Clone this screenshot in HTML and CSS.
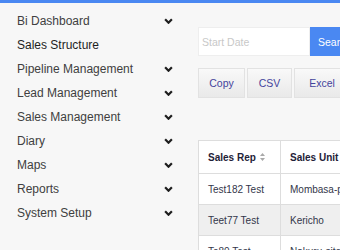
FILE: index.html
```html
<!DOCTYPE html>
<html lang="en">

<head>
    <meta charset="UTF-8">
    <meta name="viewport" content="width=device-width, initial-scale=1.0">
    <title>Sales Structure</title>
    <link rel="stylesheet" href="styles.css">
</head>

<body>
    <div class="topbar"></div>

    <div class="layout">
        <ul class="sidebar">
            <li>Bi Dashboard <svg class="chev" viewBox="0 0 8 5"><path d="M1 1l3 3 3-3"/></svg></li>
            <li class="active">Sales Structure</li>
            <li>Pipeline Management <svg class="chev" viewBox="0 0 8 5"><path d="M1 1l3 3 3-3"/></svg></li>
            <li>Lead Management <svg class="chev" viewBox="0 0 8 5"><path d="M1 1l3 3 3-3"/></svg></li>
            <li>Sales Management <svg class="chev" viewBox="0 0 8 5"><path d="M1 1l3 3 3-3"/></svg></li>
            <li>Diary <svg class="chev" viewBox="0 0 8 5"><path d="M1 1l3 3 3-3"/></svg></li>
            <li>Maps <svg class="chev" viewBox="0 0 8 5"><path d="M1 1l3 3 3-3"/></svg></li>
            <li>Reports <svg class="chev" viewBox="0 0 8 5"><path d="M1 1l3 3 3-3"/></svg></li>
            <li>System Setup <svg class="chev" viewBox="0 0 8 5"><path d="M1 1l3 3 3-3"/></svg></li>
        </ul>

        <div class="main">
            <div class="search-row">
                <input type="text" class="date-input" placeholder="Start Date">
                <button type="button" class="search-btn">Search</button>
            </div>

            <div class="export-row">
                <button type="button" class="export-btn copy">Copy</button>
                <button type="button" class="export-btn csv">CSV</button>
                <button type="button" class="export-btn excel">Excel</button>
            </div>

            <table class="data-table">
                <thead>
                    <tr>
                        <th class="col-rep">Sales Rep <svg class="sort" viewBox="0 0 5 8"><path d="M2.5 0L5 3H0zM2.5 8L0 5h5z"/></svg></th>
                        <th>Sales Unit <svg class="sort" viewBox="0 0 5 8"><path d="M2.5 0L5 3H0zM2.5 8L0 5h5z"/></svg></th>
                    </tr>
                </thead>
                <tbody>
                    <tr>
                        <td>Test182 Test</td>
                        <td>Mombasa-port</td>
                    </tr>
                    <tr class="odd">
                        <td>Teet77 Test</td>
                        <td>Kericho</td>
                    </tr>
                    <tr>
                        <td>Te80 Test</td>
                        <td>Nakuru-site</td>
                    </tr>
                </tbody>
            </table>
        </div>
    </div>
</body>

</html>
```

FILE: styles.css
```css
/* Sales structure page */

body {
    font-family: "Liberation Sans", Arial, sans-serif;
    margin: 0;
    padding: 0;
    background-color: #f7f7f7;
    overflow: hidden;
}

.topbar {
    height: 3px;
    background-color: #4a88f2;
}

.layout {
    display: flex;
}

/* Sidebar */

.sidebar {
    width: 198px;
    flex-shrink: 0;
    list-style: none;
    margin: 0;
    padding: 6px 0 0 0;
    box-sizing: border-box;
}

.sidebar li {
    display: flex;
    align-items: center;
    justify-content: space-between;
    height: 24px;
    padding: 0 25px 0 17px;
    font-size: 12px;
    color: #404040;
}

.sidebar li.active {
    color: #1e1e1e;
}

.chev {
    width: 9px;
    height: 6px;
    fill: none;
    stroke: #1e1e1e;
    stroke-width: 2;
}

/* Main */

.main {
    flex: 1;
    min-width: 0;
    overflow: hidden;
    padding-top: 24px;
}

.search-row {
    display: flex;
}

.date-input {
    width: 112px;
    height: 29px;
    flex-shrink: 0;
    box-sizing: border-box;
    border: 1px solid #eee;
    background: #fff;
    padding: 0 3px;
    font-family: inherit;
    font-size: 10.5px;
    outline: none;
}

.date-input::placeholder {
    color: #c8c8c8;
}

.search-btn {
    width: 70px;
    height: 29px;
    flex-shrink: 0;
    border: none;
    background-color: #4a88f2;
    color: #fff;
    font-family: inherit;
    font-size: 10.5px;
    text-align: left;
    padding: 0 8px;
}

.export-row {
    display: flex;
    gap: 2px;
    margin-top: 12px;
}

.export-btn {
    height: 30px;
    flex-shrink: 0;
    box-sizing: border-box;
    border: 1px solid #e2e2e2;
    background: linear-gradient(#f9f9f9, #e9e9e9);
    color: #44449c;
    font-family: inherit;
    font-size: 10.5px;
    padding: 0;
}

.copy {
    width: 47px;
}

.csv {
    width: 45px;
}

.excel {
    width: 56px;
}

/* Table */

.data-table {
    margin-top: 42px;
    width: 260px;
    border-collapse: collapse;
    background-color: #fff;
    font-size: 10px;
    color: #33364a;
    white-space: nowrap;
}

.data-table th,
.data-table td {
    border: 1px solid #ddd;
    text-align: left;
    padding: 0 9px;
}

.data-table th {
    height: 32px;
    font-weight: bold;
    color: #1f2238;
}

.data-table td {
    height: 30px;
}

.data-table .col-rep {
    width: 63px;
}

.data-table tr.odd td {
    background-color: #efefef;
}

.sort {
    width: 5px;
    height: 8px;
    fill: #aaa;
    margin-left: 1px;
}
```
